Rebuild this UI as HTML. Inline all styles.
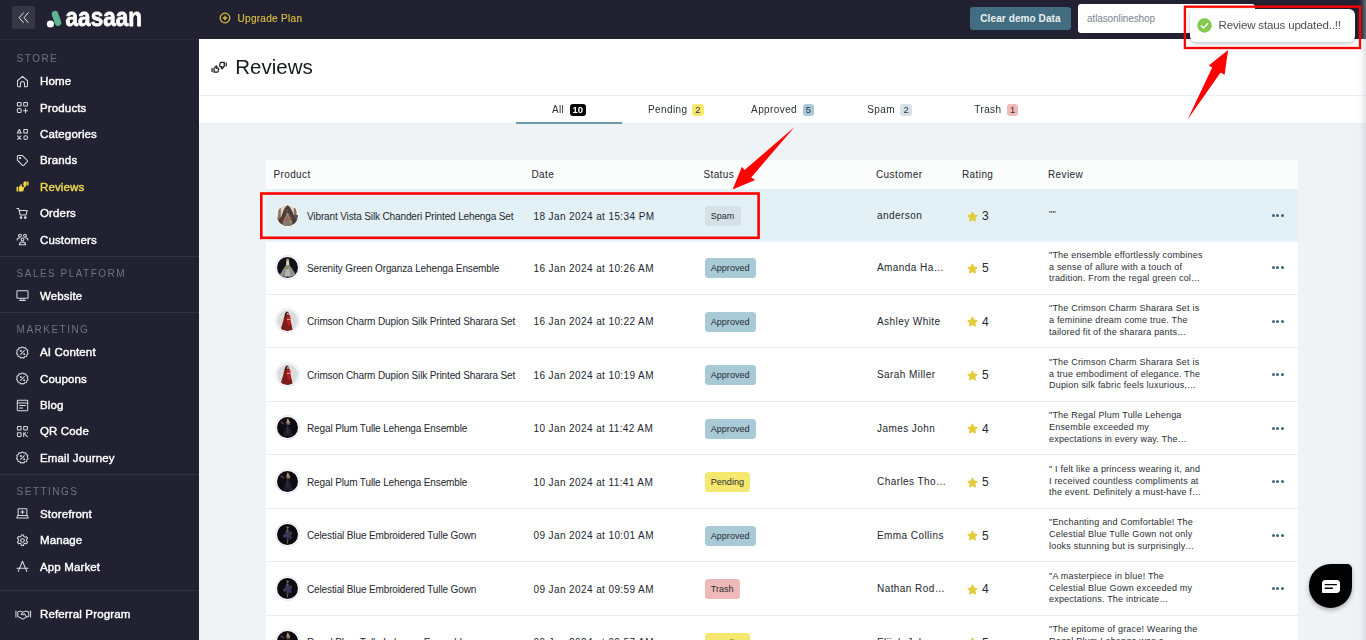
<!DOCTYPE html>
<html lang="en">
<head>
<meta charset="utf-8">
<title>Reviews</title>
<style>
*{box-sizing:border-box;margin:0;padding:0}
html,body{width:1366px;height:640px;overflow:hidden}
body{position:relative;opacity:.999;background:#eff3f6;font-family:"Liberation Sans",Arial,sans-serif;color:#2b2f36;-webkit-font-smoothing:antialiased}
.abs{position:absolute}
/* ---------- top bar ---------- */
#topbar{position:absolute;left:0;top:0;width:1366px;height:39px;background:#222131}
#collapse{position:absolute;left:12.300px;top:6.300px;width:23px;height:23px;background:#373646;border-radius:2px}
#collapse svg{position:absolute;left:0;top:0}
#logo{position:absolute;left:44px;top:4px;width:104px;height:30px}
#upgrade{position:absolute;left:219px;top:11.800px;-webkit-text-stroke:.2px #d6bb3f;height:14px;line-height:14px;font-size:10px;letter-spacing:.3px;color:#d6bb3f;white-space:nowrap}
#upgrade svg{position:absolute;left:0;top:.6px}
#upgrade span{position:absolute;left:18.5px;top:0}
#clearbtn{position:absolute;left:970px;top:7px;width:101px;height:23px;border-radius:3px;background:#426d80;color:#e9eff1;font-size:10px;font-weight:700;letter-spacing:.1px;line-height:23px;text-align:center;white-space:nowrap}
#store{position:absolute;left:1078px;top:3.500px;width:177px;height:29.500px;border-radius:3px;background:#fff;color:#7a8591;font-size:10px;letter-spacing:-.1px;line-height:29px;padding-left:9px;white-space:nowrap}
/* ---------- sidebar ---------- */
#sidebar{position:absolute;left:0;top:39px;width:199px;height:601px;background:#222131;box-shadow:inset 0 1px 0 #2b2a3a}
.sec{position:absolute;left:16.600px;height:12px;line-height:12px;font-size:10px;letter-spacing:1.480px;color:#73727d;white-space:nowrap}
.item{position:absolute;left:0;width:199px;height:26px;line-height:26px;font-size:11.5px;letter-spacing:.14px;color:#fff;white-space:nowrap;-webkit-text-stroke:.4px #fff;margin-top:0}
.item span{position:absolute;left:40px;top:0}
.item svg{position:absolute;left:16.3px;top:6.5px;width:13px;height:13px;overflow:visible;color:#dcdce1}
.item.act svg{color:#f2d94a}
.item.act{color:#f2d94a;-webkit-text-stroke:.4px #f2d94a}
.sdiv{position:absolute;left:0;width:199px;height:1px;background:#33323f}
/* ---------- main ---------- */
#head{position:absolute;left:199px;top:39px;width:1167px;height:57px;background:#fff;border-bottom:1px solid #e8edf1}
#head h1{position:absolute;left:36.300px;top:16px;font-size:20.500px;line-height:24px;font-weight:400;color:#17181c;letter-spacing:0}
#head svg{position:absolute;left:12px;top:21.900px}
#tabs{position:absolute;left:199px;top:96px;width:1167px;height:28px;background:#fff;border-bottom:1px solid #e9eef2}
.tab{position:absolute;top:0;height:28px;width:106.6px;font-size:10px;letter-spacing:.4px;color:#2b2f36;white-space:nowrap}
.tab .t{position:absolute;margin-left:.4px;top:7.7px;line-height:12px;height:12px}
.tab .b{position:absolute;top:7.5px;height:12px;line-height:12px;border-radius:3px;font-size:9.500px;letter-spacing:0;text-align:center;color:#2b2f36}
#uline{position:absolute;left:317px;top:26px;width:106px;height:2px;background:#6f9bb2}
/* ---------- table ---------- */
#table{position:absolute;z-index:0;left:266px;top:160px;width:1032px;height:480px;background:#fff}
#thead{position:absolute;left:0;top:0;width:1032px;height:29px;background:#fbfcfc;font-size:10px;letter-spacing:.4px;color:#23272e}
#thead span{position:absolute;top:8px;line-height:13px;white-space:nowrap}
.row{position:absolute;left:0;width:1032px;height:53.5px;border-bottom:1px solid #e8edf3;background:#fff}
.row.hl{background:#e3f1f6;border-bottom:1px solid #f0f7fa;height:53px;z-index:1}
.row>*{position:absolute;white-space:nowrap;margin-top:.5px}
.row.hl>*{margin-top:.8px}
.av{left:9.1px;top:13px;width:25px;height:25px;border-radius:50%;background:#fdfdff;border:1px solid #e2e7f2}
.av svg{position:absolute;left:1px;top:1px;width:21px;height:21px;border-radius:50%}
.pn{left:41px;top:20.100px;line-height:14px;font-size:10px;letter-spacing:-.13px;color:#23272e}
.dt{left:267.5px;top:19.800px;line-height:14px;font-size:10px;letter-spacing:.4px;color:#23272e}
.st{left:438.5px;top:16.300px;height:20px;line-height:20px;border-radius:3.5px;font-size:9px;letter-spacing:.05px;padding:0 6.200px;color:#262b33}
.st.ap{background:#a8cad6}
.st.sp{background:#d5e0e7}
.st.pe{background:#f6e76e}
.st.tr{background:#f0b9b9}
.cu{left:611px;top:19.5px;line-height:14px;font-size:10px;letter-spacing:.43px;color:#23272e}
.star{left:700.900px;top:20.800px;width:11px;height:11px}
.rt{left:716px;top:19.400px;line-height:15px;font-size:12px;color:#23272e}
.rv{left:783px;top:8.100px;font-size:9px;line-height:11.7px;letter-spacing:.2px;color:#2a2d33;white-space:nowrap}
.dots{left:1006px;top:24.5px;width:12px;height:4px}
.dots i{position:absolute;top:0;width:3px;height:3px;border-radius:50%;background:#3b6378}
/* ---------- overlays ---------- */
#toast{position:absolute;left:1190px;top:9px;width:164.5px;height:32.5px;background:#fff;border-radius:6px;box-shadow:0 1px 6px rgba(0,0,0,.18),0 2px 3px rgba(0,0,0,.08);font-size:11.5px;letter-spacing:-.15px;color:#4e4e4e;line-height:32.5px;white-space:nowrap}
#toast span{position:absolute;left:28.5px;top:0}
#toast svg{position:absolute;left:6.8px;top:9px}
#anno{position:absolute;left:0;top:0;width:1366px;height:640px;pointer-events:none}
#chat{position:absolute;left:1309px;top:564px;width:43px;height:44px;background:#000;border-radius:22px 5px 22px 22px;box-shadow:0 2px 5px rgba(0,0,0,.3)}
#chat svg{position:absolute;left:12.700px;top:15.800px}
</style>
</head>
<body>

<!-- ================= TABLE ================= -->
<div id="table">
  <div id="thead">
    <span style="left:7.4px">Product</span>
    <span style="left:265.4px">Date</span>
    <span style="left:437.4px">Status</span>
    <span style="left:610px">Customer</span>
    <span style="left:696px">Rating</span>
    <span style="left:782px">Review</span>
  </div>
<div class="row hl" style="top:29px"><span class="av"><svg viewBox="0 0 21 21"><rect width="21" height="21" fill="#ddd6cf"/><rect x="0" y="12" width="21" height="9" fill="#6d5f57"/><rect x="1.200" y="3" width="2.600" height="11" fill="#8a725e"/><rect x="16.800" y="3" width="2.600" height="10" fill="#8a725e"/><rect x="17" y="10" width="4" height="3" fill="#4d5566"/><path d="M10.500.3c-2.500 1.500-4.500 6-6 11-1.200 2-3 4-4 6.500V21h20v-4c-1-2.500-2.500-4-3.500-6-1.500-5-4-9.500-6.500-10.700z" fill="#4b3c35"/><path d="M10.500 8c-2 2-4 6-5.500 13h11c-1.500-7-3.500-11-5.500-13z" fill="#85796f"/><circle cx="9.700" cy="14.500" r="1" fill="#c8432f"/><circle cx="13.700" cy="12.800" r="1" fill="#c8432f"/><circle cx="5.600" cy="15.500" r=".9" fill="#b8392a"/><circle cx="14" cy="16.500" r=".8" fill="#c9c93c"/><circle cx="10" cy="5.500" r=".8" fill="#b96a3a"/><circle cx="10.500" cy="9" r="1.200" fill="#a08f86"/></svg></span><span class="pn">Vibrant Vista Silk Chanderi Printed Lehenga Set</span><span class="dt">18 Jan 2024 at 15:34 PM</span><span class="st sp">Spam</span><span class="cu">anderson</span><svg class="star" viewBox="0 0 11 11"><path d="M5.500.7c.3 0 .5.200.6.400l1.200 2.500 2.700.4c.6.100.8.700.4 1.100L8.400 7l.5 2.700c.1.600-.5 1-1 .7L5.500 9.100 3.100 10.400c-.5.300-1.100-.1-1-.7L2.600 7 .6 5.100c-.4-.4-.2-1 .4-1.100l2.700-.4L4.900 1.100c.1-.2.300-.4.600-.4z" fill="#e3cc3b"/></svg><span class="rt">3</span><span class="rv" style="top:19.500px">""</span><span class="dots"><i style="left:0"></i><i style="left:4.300px"></i><i style="left:8.600px"></i></span></div>
<div class="row" style="top:81.3px"><span class="av"><svg viewBox="0 0 21 21"><rect width="21" height="21" fill="#131016"/><path d="M10.700 6c-2 2.500-6.500 8.500-8.700 13.500h17.500c-2-5-6.800-11-8.800-13.500z" fill="#8f8f8b"/><path d="M10.700 8c-1 2.500-2.500 7-3 11.500h6c-.5-4.500-2-9-3-11.500z" fill="#b3b2ac"/><path d="M9.600 2.500h2.200l.6 5.500H9z" fill="#e2d3b9"/><circle cx="10.700" cy="2.800" r="1.200" fill="#b79a72"/><ellipse cx="10.300" cy="10.800" rx="1.500" ry="1.300" fill="#84832f"/></svg></span><span class="pn">Serenity Green Organza Lehenga Ensemble</span><span class="dt">16 Jan 2024 at 10:26 AM</span><span class="st ap">Approved</span><span class="cu">Amanda Ha…</span><svg class="star" viewBox="0 0 11 11"><path d="M5.500.7c.3 0 .5.200.6.400l1.200 2.500 2.700.4c.6.100.8.700.4 1.100L8.400 7l.5 2.700c.1.600-.5 1-1 .7L5.500 9.100 3.100 10.400c-.5.300-1.100-.1-1-.7L2.600 7 .6 5.100c-.4-.4-.2-1 .4-1.100l2.700-.4L4.900 1.100c.1-.2.300-.4.600-.4z" fill="#e3cc3b"/></svg><span class="rt">5</span><span class="rv">"The ensemble effortlessly combines<br>a sense of allure with a touch of<br>tradition. From the regal green col…</span><span class="dots"><i style="left:0"></i><i style="left:4.300px"></i><i style="left:8.600px"></i></span></div>
<div class="row" style="top:134.8px"><span class="av"><svg viewBox="0 0 21 21"><rect width="21" height="21" fill="#dddcdc"/><path d="M9.500 2.200c-1.300.3-1.700 2-2 4-.6 1.500-1 3-1.200 4.500-.8 3-2 6-2.500 9l3.200 1.300h6.500l2-1.300c-.5-3.500-1.500-6.500-2-9.500l-.3-2.800c0-1.500-.5-2.300-1.500-2.800-.3-1.400-1-2.300-2.200-2.400z" fill="#7c1e1b"/><path d="M9.800 6h3.300l.4 2.800-2 .8 2.300 5-2.300 1.500-2-5.500z" fill="#c3201f"/><path d="M10 9.200h3.200v.9H10z" fill="#e5c9b0"/><path d="M9 2.200c1-.8 2.300-.5 2.600.8l-.3 2.500H9.500L8.300 8.500l-.6-2.500z" fill="#3b2620"/><circle cx="10.700" cy="3.900" r=".9" fill="#d9b59a"/></svg></span><span class="pn">Crimson Charm Dupion Silk Printed Sharara Set</span><span class="dt">16 Jan 2024 at 10:22 AM</span><span class="st ap">Approved</span><span class="cu">Ashley White</span><svg class="star" viewBox="0 0 11 11"><path d="M5.500.7c.3 0 .5.200.6.400l1.200 2.500 2.700.4c.6.100.8.700.4 1.100L8.400 7l.5 2.700c.1.600-.5 1-1 .7L5.500 9.100 3.100 10.400c-.5.300-1.100-.1-1-.7L2.600 7 .6 5.100c-.4-.4-.2-1 .4-1.100l2.700-.4L4.900 1.100c.1-.2.300-.4.600-.4z" fill="#e3cc3b"/></svg><span class="rt">4</span><span class="rv">"The Crimson Charm Sharara Set is<br>a feminine dream come true. The<br>tailored fit of the sharara pants…</span><span class="dots"><i style="left:0"></i><i style="left:4.300px"></i><i style="left:8.600px"></i></span></div>
<div class="row" style="top:188.3px"><span class="av"><svg viewBox="0 0 21 21"><rect width="21" height="21" fill="#dddcdc"/><path d="M9.500 2.200c-1.300.3-1.700 2-2 4-.6 1.500-1 3-1.200 4.500-.8 3-2 6-2.500 9l3.200 1.300h6.500l2-1.300c-.5-3.500-1.500-6.500-2-9.500l-.3-2.800c0-1.500-.5-2.300-1.500-2.800-.3-1.400-1-2.300-2.200-2.400z" fill="#7c1e1b"/><path d="M9.800 6h3.300l.4 2.800-2 .8 2.300 5-2.300 1.500-2-5.500z" fill="#c3201f"/><path d="M10 9.200h3.200v.9H10z" fill="#e5c9b0"/><path d="M9 2.200c1-.8 2.300-.5 2.600.8l-.3 2.500H9.500L8.300 8.500l-.6-2.500z" fill="#3b2620"/><circle cx="10.700" cy="3.900" r=".9" fill="#d9b59a"/></svg></span><span class="pn">Crimson Charm Dupion Silk Printed Sharara Set</span><span class="dt">16 Jan 2024 at 10:19 AM</span><span class="st ap">Approved</span><span class="cu">Sarah Miller</span><svg class="star" viewBox="0 0 11 11"><path d="M5.500.7c.3 0 .5.200.6.400l1.200 2.500 2.700.4c.6.100.8.700.4 1.100L8.400 7l.5 2.700c.1.600-.5 1-1 .7L5.500 9.100 3.100 10.400c-.5.300-1.100-.1-1-.7L2.600 7 .6 5.100c-.4-.4-.2-1 .4-1.100l2.700-.4L4.900 1.100c.1-.2.300-.4.600-.4z" fill="#e3cc3b"/></svg><span class="rt">5</span><span class="rv">"The Crimson Charm Sharara Set is<br>a true embodiment of elegance. The<br>Dupion silk fabric feels luxurious,…</span><span class="dots"><i style="left:0"></i><i style="left:4.300px"></i><i style="left:8.600px"></i></span></div>
<div class="row" style="top:241.8px"><span class="av"><svg viewBox="0 0 21 21"><rect width="21" height="21" fill="#0d0b10"/><path d="M10.500 7c-1.500 2-3.500 6.500-4.500 12h10c-1-5.500-3-10-5.500-12z" fill="#1d1c2b"/><path d="M10.800 8l-.6 8.500 1.400 0z" fill="#4a3a3f"/><path d="M4 4l3.500 2.500-1 1.200L3.200 5.500z" fill="#4d3a3e"/><path d="M10 2.500h1.600l1.600 3.200-.5 2.300H9.800l-.5-2.500z" fill="#a98d75"/><path d="M10.300 1.500h1v2.500h-1z" fill="#b79a6c"/><path d="M9.800 6.500h2.800v1.300H9.800z" fill="#2d3050"/></svg></span><span class="pn">Regal Plum Tulle Lehenga Ensemble</span><span class="dt">10 Jan 2024 at 11:42 AM</span><span class="st ap">Approved</span><span class="cu">James John</span><svg class="star" viewBox="0 0 11 11"><path d="M5.500.7c.3 0 .5.200.6.400l1.200 2.500 2.700.4c.6.100.8.700.4 1.100L8.400 7l.5 2.700c.1.600-.5 1-1 .7L5.500 9.100 3.100 10.400c-.5.300-1.100-.1-1-.7L2.600 7 .6 5.100c-.4-.4-.2-1 .4-1.100l2.700-.4L4.900 1.100c.1-.2.300-.4.600-.4z" fill="#e3cc3b"/></svg><span class="rt">4</span><span class="rv">"The Regal Plum Tulle Lehenga<br>Ensemble exceeded my<br>expectations in every way. The…</span><span class="dots"><i style="left:0"></i><i style="left:4.300px"></i><i style="left:8.600px"></i></span></div>
<div class="row" style="top:295.3px"><span class="av"><svg viewBox="0 0 21 21"><rect width="21" height="21" fill="#0d0b10"/><path d="M10.500 7c-1.500 2-3.500 6.500-4.500 12h10c-1-5.500-3-10-5.500-12z" fill="#1d1c2b"/><path d="M10.800 8l-.6 8.500 1.400 0z" fill="#4a3a3f"/><path d="M4 4l3.500 2.500-1 1.200L3.200 5.500z" fill="#4d3a3e"/><path d="M10 2.500h1.600l1.600 3.200-.5 2.300H9.800l-.5-2.500z" fill="#a98d75"/><path d="M10.300 1.500h1v2.500h-1z" fill="#b79a6c"/><path d="M9.800 6.500h2.800v1.300H9.800z" fill="#2d3050"/></svg></span><span class="pn">Regal Plum Tulle Lehenga Ensemble</span><span class="dt">10 Jan 2024 at 11:41 AM</span><span class="st pe">Pending</span><span class="cu">Charles Tho…</span><svg class="star" viewBox="0 0 11 11"><path d="M5.500.7c.3 0 .5.200.6.400l1.200 2.500 2.700.4c.6.100.8.700.4 1.100L8.400 7l.5 2.700c.1.600-.5 1-1 .7L5.500 9.100 3.100 10.400c-.5.300-1.100-.1-1-.7L2.600 7 .6 5.100c-.4-.4-.2-1 .4-1.100l2.700-.4L4.900 1.100c.1-.2.300-.4.600-.4z" fill="#e3cc3b"/></svg><span class="rt">5</span><span class="rv">" I felt like a princess wearing it, and<br>I received countless compliments at<br>the event. Definitely a must-have f…</span><span class="dots"><i style="left:0"></i><i style="left:4.300px"></i><i style="left:8.600px"></i></span></div>
<div class="row" style="top:348.8px"><span class="av"><svg viewBox="0 0 21 21"><rect width="21" height="21" fill="#0d0b0f"/><path d="M9.500 5.500h2.200c1 2.500 2.300 5.500 3.200 9l-1.500.8-1.400-2-.5 3.700h-1.700l-.6-4-2.500 1c.5-3 1.600-6 2.800-8.500z" fill="#323b5c"/><path d="M10.200 5.500l.5 3 .5-3z" fill="#a98769"/><circle cx="10.600" cy="3.600" r="1.100" fill="#a98769"/><path d="M9.800 2.300h1.600v1H9.800z" fill="#5a4636"/><path d="M10 16.500h.9l-.2 3.500h-.5z" fill="#8b6f5b"/><path d="M7.300 11l-.8 1.500M13.800 7.500l.4 3" stroke="#a98769" stroke-width=".7"/></svg></span><span class="pn">Celestial Blue Embroidered Tulle Gown</span><span class="dt">09 Jan 2024 at 10:01 AM</span><span class="st ap">Approved</span><span class="cu">Emma Collins</span><svg class="star" viewBox="0 0 11 11"><path d="M5.500.7c.3 0 .5.200.6.400l1.200 2.500 2.700.4c.6.100.8.700.4 1.100L8.400 7l.5 2.700c.1.600-.5 1-1 .7L5.500 9.100 3.100 10.400c-.5.300-1.100-.1-1-.7L2.600 7 .6 5.100c-.4-.4-.2-1 .4-1.100l2.700-.4L4.900 1.100c.1-.2.300-.4.600-.4z" fill="#e3cc3b"/></svg><span class="rt">5</span><span class="rv">"Enchanting and Comfortable! The<br>Celestial Blue Tulle Gown not only<br>looks stunning but is surprisingly…</span><span class="dots"><i style="left:0"></i><i style="left:4.300px"></i><i style="left:8.600px"></i></span></div>
<div class="row" style="top:402.3px"><span class="av"><svg viewBox="0 0 21 21"><rect width="21" height="21" fill="#0d0b0f"/><path d="M9.500 5.500h2.200c1 2.500 2.300 5.500 3.200 9l-1.500.8-1.400-2-.5 3.700h-1.700l-.6-4-2.500 1c.5-3 1.600-6 2.800-8.500z" fill="#323b5c"/><path d="M10.200 5.500l.5 3 .5-3z" fill="#a98769"/><circle cx="10.600" cy="3.600" r="1.100" fill="#a98769"/><path d="M9.800 2.300h1.600v1H9.800z" fill="#5a4636"/><path d="M10 16.500h.9l-.2 3.500h-.5z" fill="#8b6f5b"/><path d="M7.300 11l-.8 1.500M13.800 7.500l.4 3" stroke="#a98769" stroke-width=".7"/></svg></span><span class="pn">Celestial Blue Embroidered Tulle Gown</span><span class="dt">09 Jan 2024 at 09:59 AM</span><span class="st tr">Trash</span><span class="cu">Nathan Rod…</span><svg class="star" viewBox="0 0 11 11"><path d="M5.500.7c.3 0 .5.200.6.400l1.200 2.500 2.700.4c.6.100.8.700.4 1.100L8.400 7l.5 2.700c.1.600-.5 1-1 .7L5.500 9.100 3.100 10.400c-.5.300-1.100-.1-1-.7L2.600 7 .6 5.100c-.4-.4-.2-1 .4-1.100l2.700-.4L4.900 1.100c.1-.2.300-.4.600-.4z" fill="#e3cc3b"/></svg><span class="rt">4</span><span class="rv">"A masterpiece in blue! The<br>Celestial Blue Gown exceeded my<br>expectations. The intricate…</span><span class="dots"><i style="left:0"></i><i style="left:4.300px"></i><i style="left:8.600px"></i></span></div>
<div class="row" style="top:455.8px"><span class="av"><svg viewBox="0 0 21 21"><rect width="21" height="21" fill="#0d0b10"/><path d="M10.500 7c-1.500 2-3.500 6.500-4.500 12h10c-1-5.500-3-10-5.500-12z" fill="#1d1c2b"/><path d="M10.800 8l-.6 8.500 1.400 0z" fill="#4a3a3f"/><path d="M4 4l3.500 2.500-1 1.200L3.200 5.500z" fill="#4d3a3e"/><path d="M10 2.500h1.600l1.600 3.200-.5 2.300H9.800l-.5-2.500z" fill="#a98d75"/><path d="M10.300 1.500h1v2.500h-1z" fill="#b79a6c"/><path d="M9.800 6.500h2.800v1.300H9.800z" fill="#2d3050"/></svg></span><span class="pn">Regal Plum Tulle Lehenga Ensemble</span><span class="dt">09 Jan 2024 at 09:57 AM</span><span class="st pe">Pending</span><span class="cu">Elijah Joh…</span><svg class="star" viewBox="0 0 11 11"><path d="M5.500.7c.3 0 .5.200.6.400l1.200 2.500 2.700.4c.6.100.8.700.4 1.100L8.400 7l.5 2.700c.1.600-.5 1-1 .7L5.500 9.100 3.100 10.400c-.5.300-1.100-.1-1-.7L2.600 7 .6 5.100c-.4-.4-.2-1 .4-1.100l2.700-.4L4.900 1.100c.1-.2.300-.4.600-.4z" fill="#e3cc3b"/></svg><span class="rt">5</span><span class="rv">"The epitome of grace! Wearing the<br>Regal Plum Lehenga was a<br>dream come true. The…</span><span class="dots"><i style="left:0"></i><i style="left:4.300px"></i><i style="left:8.600px"></i></span></div>
</div>

<!-- ================= HEADER ================= -->
<div id="head">
  <svg width="16.300" height="12.700" viewBox="0 0 18 14" fill="none" stroke="#222" stroke-width="1.400"><path d="M1.2 7.6v4.6"/><path d="M3.4 12.3V8.2l2.2-2.7c.6-.2 1 .3.9.9l-.4 1.4h1.6c.6 0 .9.5.8 1l-.6 2.6c-.1.5-.5.9-1 .9z"/><path d="M16.8 6.2V1.7"/><path d="M14.6 1.6v4.1l-2.2 2.7c-.6.2-1-.3-.9-.9l.4-1.4h-1.6c-.6 0-.9-.5-.8-1l.6-2.6c.1-.5.5-.9 1-.9z"/></svg>
  <h1>Reviews</h1>
</div>
<div id="tabs">
  <div class="tab" style="left:317px"><span class="t" style="left:35.5px">All</span><span class="b" style="left:53.5px;width:16.5px;background:#000;color:#fff;font-weight:700">10</span></div>
  <div class="tab" style="left:423.6px"><span class="t" style="left:25px">Pending</span><span class="b" style="left:69.5px;width:11.5px;background:#f6e76e">2</span></div>
  <div class="tab" style="left:530.2px"><span class="t" style="left:21.5px">Approved</span><span class="b" style="left:73.5px;width:11.5px;background:#a8cad6">5</span></div>
  <div class="tab" style="left:636.8px"><span class="t" style="left:31px">Spam</span><span class="b" style="left:64.5px;width:11.5px;background:#d5e0e7">2</span></div>
  <div class="tab" style="left:743.4px"><span class="t" style="left:31.5px">Trash</span><span class="b" style="left:64.5px;width:11.5px;background:#f0b9b9">1</span></div>
  <div id="uline"></div>
</div>

<!-- ================= TOP BAR ================= -->
<div id="topbar">
  <div id="collapse"><svg width="23" height="23" viewBox="0 0 23 23" fill="none" stroke="#e8e6e0" stroke-width="1"><path d="M11.6 6.6 7.2 11.7l4.4 5.1M16.4 6.6 12 11.7l4.4 5.1"/></svg></div>
  <svg id="logo" viewBox="0 0 104 30">
    <circle cx="6.4" cy="20" r="3.6" fill="#fff"/>
    <rect x="9.2" y="6.6" width="6.6" height="15.6" rx="3.3" fill="#5bb58f" transform="rotate(-19 12.5 14.4)"/>
    <text x="21.600" y="22.400" font-family="Liberation Sans, Arial, sans-serif" font-weight="700" font-size="26.600" fill="#fff" stroke="#fff" stroke-width=".8" stroke-linejoin="round" textLength="76.400" lengthAdjust="spacingAndGlyphs">aasaan</text>
  </svg>
  <div id="upgrade"><svg width="12" height="12" viewBox="0 0 12 12" fill="none" stroke="#d6bb3f"><circle cx="6" cy="6" r="4.800" stroke-width="1.250"/><path d="M6 3.800v4.400M3.800 6h4.400" stroke-width="1.400"/></svg><span>Upgrade Plan</span></div>
    <div id="clearbtn">Clear demo Data</div>
  <div id="store">atlasonlineshop</div>
</div>

<!-- ================= SIDEBAR ================= -->
<div id="sidebar">
<div class="sec" style="top:14.299999999999997px">STORE</div>
<div class="item" style="top:29px"><svg viewBox="0 0 14 14" stroke="currentColor" fill="none" stroke-width="1.1" stroke-linecap="round" stroke-linejoin="round"><path d="M1.600 6.200 7 1.500l5.400 4.700v5.500c0 .5-.4.900-.9.900H9.200V9.300a2.200 2.200 0 0 0-4.400 0v3.300H2.500c-.5 0-.9-.4-.9-.9z"/></svg><span>Home</span></div>
<div class="item" style="top:55.5px"><svg viewBox="0 0 14 14" stroke="currentColor" fill="none" stroke-width="1.1" stroke-linecap="round" stroke-linejoin="round"><rect x="1.500" y="1.500" width="4" height="4" rx=".6"/><rect x="8.300" y="1.500" width="4" height="4" rx=".6"/><rect x="1.500" y="8.300" width="4" height="4" rx=".6"/><path d="M10.300 8.200v4.400M8.100 10.400h4.400"/></svg><span>Products</span></div>
<div class="item" style="top:82px"><svg viewBox="0 0 14 14" stroke="currentColor" fill="none" stroke-width="1.1" stroke-linecap="round" stroke-linejoin="round"><path d="M3.500 1.600 5.600 5.400H1.400z"/><rect x="8.400" y="1.600" width="3.900" height="3.900" rx=".5"/><path d="M1.700 8.600l3.600 3.600M5.300 8.600l-3.600 3.600"/><circle cx="10.400" cy="10.400" r="2"/></svg><span>Categories</span></div>
<div class="item" style="top:108.30000000000001px"><svg viewBox="0 0 14 14" stroke="currentColor" fill="none" stroke-width="1.1" stroke-linecap="round" stroke-linejoin="round"><path d="M1.500 2.400c0-.5.400-.9.900-.9h4.300l5.500 5.500c.4.400.4 1 0 1.300l-3.900 3.900c-.4.400-1 .4-1.300 0L1.500 6.700z"/><circle cx="4.400" cy="4.400" r=".7" fill="currentColor"/></svg><span>Brands</span></div>
<div class="item act" style="top:134.6px"><svg viewBox="0 0 14 14" fill="currentColor" stroke="none"><rect x=".6" y="7.300" width="1.700" height="5" rx=".3"/><path d="M3 12.300V7.700l2.300-3c.7-.2 1.200.3 1.100 1l-.4 1.500h1.800c.6 0 1 .5.900 1.100l-.6 3c-.1.600-.6 1-1.200 1z"/><rect x="12" y="1.700" width="1.500" height="4.200" rx=".3"/><path d="M11.400 1.700v3.900L9.500 8.100c-.6.200-1-.2-.9-.8l.3-1.300H7.700l.4-3.400c.1-.5.500-.9 1-.9z"/></svg><span>Reviews</span></div>
<div class="item" style="top:161px"><svg viewBox="0 0 14 14" stroke="currentColor" fill="none" stroke-width="1.1" stroke-linecap="round" stroke-linejoin="round"><path d="M.9 1.600h1.900l1.700 7h6.300l1.300-4.900H3.500"/><circle cx="5.400" cy="11.400" r=".9" fill="currentColor"/><circle cx="10" cy="11.400" r=".9" fill="currentColor"/></svg><span>Orders</span></div>
<div class="item" style="top:187.5px"><svg viewBox="0 0 14 14" stroke="currentColor" fill="none" stroke-width="1.1" stroke-linecap="round" stroke-linejoin="round" stroke-width="1"><circle cx="4.300" cy="2.800" r="1.500"/><circle cx="9.700" cy="2.800" r="1.500"/><circle cx="7" cy="7" r="1.500"/><path d="M1.200 7.500c0-1.400 1.300-2.300 3-2.300M12.800 7.500c0-1.400-1.300-2.300-3-2.300M3.700 12.700c0-1.700 1.400-2.900 3.300-2.900s3.300 1.200 3.300 2.900z"/></svg><span>Customers</span></div>
<div class="sdiv" style="top:217px"></div>
<div class="sec" style="top:228.5px">SALES PLATFORM</div>
<div class="item" style="top:243.5px"><svg viewBox="0 0 14 14" stroke="currentColor" fill="none" stroke-width="1.1" stroke-linecap="round" stroke-linejoin="round"><rect x="1" y="2" width="12" height="8" rx=".9"/><path d="M4 12.500h6M5.500 10.200v2.100M8.500 10.200v2.100"/></svg><span>Website</span></div>
<div class="sdiv" style="top:272.5px"></div>
<div class="sec" style="top:284.5px">MARKETING</div>
<div class="item" style="top:300px"><svg viewBox="0 0 14 14" stroke="currentColor" fill="none" stroke-width="1.1" stroke-linecap="round" stroke-linejoin="round" stroke-width="1"><path d="M7 .9l1.500 1.200 1.900-.2.600 1.800 1.700.9-.5 1.900.9 1.700-1.500 1.200-.2 1.900-1.900.2L8.300 13 7 12.400 5.300 13l-1.200-1.500-1.900-.2-.2-1.900L.5 8.200l.9-1.700-.5-1.900 1.700-.9.600-1.800 1.900.2z"/><path d="M5 9l4-4"/><circle cx="5.200" cy="5.300" r=".5" fill="currentColor"/><circle cx="8.800" cy="8.800" r=".5" fill="currentColor"/></svg><span>AI Content</span></div>
<div class="item" style="top:326.5px"><svg viewBox="0 0 14 14" stroke="currentColor" fill="none" stroke-width="1.1" stroke-linecap="round" stroke-linejoin="round" stroke-width="1"><path d="M7 .9l1.500 1.200 1.900-.2.600 1.800 1.700.9-.5 1.900.9 1.700-1.500 1.200-.2 1.900-1.900.2L8.300 13 7 12.400 5.300 13l-1.200-1.500-1.900-.2-.2-1.900L.5 8.200l.9-1.700-.5-1.900 1.700-.9.600-1.800 1.900.2z"/><path d="M5 9l4-4"/><circle cx="5.200" cy="5.300" r=".5" fill="currentColor"/><circle cx="8.800" cy="8.800" r=".5" fill="currentColor"/></svg><span>Coupons</span></div>
<div class="item" style="top:353px"><svg viewBox="0 0 14 14" stroke="currentColor" fill="none" stroke-width="1.1" stroke-linecap="round" stroke-linejoin="round"><rect x="1.400" y="1.400" width="11.200" height="11.200" rx=".8"/><path d="M1.400 4.300h11.200M3.800 7h6.400M3.800 9.600h3.400"/></svg><span>Blog</span></div>
<div class="item" style="top:379.2px"><svg viewBox="0 0 14 14" stroke="currentColor" fill="none" stroke-width="1.1" stroke-linecap="round" stroke-linejoin="round"><rect x="1.500" y="1.500" width="4" height="4" rx=".6"/><rect x="8.300" y="1.500" width="4" height="4" rx=".6"/><rect x="1.500" y="8.300" width="4" height="4" rx=".6"/><path d="M8.300 8.300v4.200M8.300 10.400l2-2.100M10 10.600l2.400 1.900M12.400 8.300v.1"/></svg><span>QR Code</span></div>
<div class="item" style="top:405.7px"><svg viewBox="0 0 14 14" stroke="currentColor" fill="none" stroke-width="1.1" stroke-linecap="round" stroke-linejoin="round" stroke-width="1"><path d="M7 .9l1.500 1.200 1.900-.2.600 1.800 1.700.9-.5 1.900.9 1.700-1.500 1.200-.2 1.900-1.900.2L8.300 13 7 12.400 5.300 13l-1.200-1.500-1.900-.2-.2-1.900L.5 8.200l.9-1.700-.5-1.900 1.700-.9.600-1.800 1.900.2z"/><path d="M5 9l4-4"/><circle cx="5.200" cy="5.300" r=".5" fill="currentColor"/><circle cx="8.800" cy="8.800" r=".5" fill="currentColor"/></svg><span>Email Journey</span></div>
<div class="sdiv" style="top:434.5px"></div>
<div class="sec" style="top:446.5px">SETTINGS</div>
<div class="item" style="top:461.79999999999995px"><svg viewBox="0 0 14 14" stroke="currentColor" fill="none" stroke-width="1.1" stroke-linecap="round" stroke-linejoin="round"><rect x="2.300" y="1.800" width="9.400" height="7.400" rx=".8"/><path d="M.9 11.800h12.200l-.9-2.600H1.800zM7 3.700v3.600M5.200 5.500h3.600"/></svg><span>Storefront</span></div>
<div class="item" style="top:488.20000000000005px"><svg viewBox="0 0 14 14" stroke="currentColor" fill="none" stroke-width="1.1" stroke-linecap="round" stroke-linejoin="round"><circle cx="7" cy="7" r="2"/><path d="M5.900 1h2.200l.4 1.700 1.200.7 1.700-.5 1.100 1.900-1.300 1.200v1.400l1.300 1.200-1.100 1.900-1.700-.5-1.200.7-.4 1.700H5.900l-.4-1.700-1.200-.7-1.700.5-1.100-1.900 1.300-1.200V5.800L1.500 4.600l1.100-1.900 1.700.5 1.200-.7z"/></svg><span>Manage</span></div>
<div class="item" style="top:514.5px"><svg viewBox="0 0 14 14" stroke="currentColor" fill="none" stroke-width="1.1" stroke-linecap="round" stroke-linejoin="round"><path d="M7 1.300 2.400 12.300M7 1.300l4.600 11M1 8.900h12"/></svg><span>App Market</span></div>
<div class="sdiv" style="top:551px"></div>
<div class="item" style="top:562px"><svg viewBox="0 0 18 14" stroke="currentColor" fill="none" stroke-width="1.1" stroke-linecap="round" stroke-linejoin="round" stroke-width="1" style="width:16.500px;left:14.500px"><path d="M1 3.300v6.400M17 3.300v6.400M3 4.200l2.800-.9 3 1.100 2.800-1.100 3.400.9v5l-2.400.4-3.400 2.100c-.5.300-1.100.2-1.500-.2L3 9.200zM8.800 4.400 6.600 6.700c.8.900 2 .9 2.800.1l.8-.7 2.400 3.300"/></svg><span>Referral Program</span></div>
</div>

<!-- ================= OVERLAYS ================= -->
<div id="chat"><svg width="18" height="13" viewBox="0 0 18 13"><path d="M3.400 0h11.200A3.400 3.400 0 0 1 18 3.400v6.200A3.400 3.400 0 0 1 14.600 13H.8a.8.800 0 0 1-.8-.8V3.400A3.400 3.400 0 0 1 3.400 0z" fill="#fff"/><path d="M3.200 4.600h11.200M3.200 8.200h7.200" stroke="#000" stroke-width="1.400" stroke-linecap="round"/></svg></div>
<div id="toast"><svg width="15" height="15" viewBox="0 0 15 15"><circle cx="7.500" cy="7.500" r="7.200" fill="#84c84e"/><path d="M4.300 7.800l2.200 2.200 4.200-4.400" fill="none" stroke="#fff" stroke-width="1.500" stroke-linecap="round" stroke-linejoin="round"/></svg><span>Review staus updated..!!</span></div>
<div style="position:absolute;left:1357px;top:0;width:9px;height:640px;background:linear-gradient(90deg,rgba(192,192,200,0),rgba(192,192,200,.07) 45%,rgba(192,192,200,.45))"></div>
<svg id="anno" viewBox="0 0 1366 640">
  <rect x="1184.900" y="6.700" width="175.100" height="41.300" fill="none" stroke="#f00" stroke-width="2.300"/>
  <rect x="261.300" y="193.500" width="497.300" height="44.300" fill="none" stroke="#f00" stroke-width="2.600"/>
  <polygon points="1228.100,50.100 1208.700,65.600 1212.200,67.400 1187.600,119.400 1220.600,72.600 1224.600,74.700" fill="#f00"/>
  <polygon points="732.600,189.400 741.900,166.800 744.600,170.100 794.800,126.800 751.200,177.400 755.200,180.100" fill="#f00"/>
</svg>
</body>
</html>
